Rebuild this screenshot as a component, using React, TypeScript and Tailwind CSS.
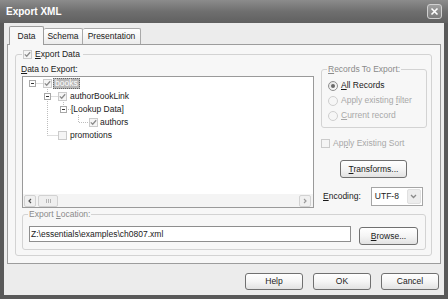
import React from 'react';

const Check = ({ checked = false, disabled = false }: { checked?: boolean; disabled?: boolean }) => (
  <span
    className={`w-[9px] h-[9px] shrink-0 border flex items-center justify-center ${
      disabled ? 'border-[#cbcbcb] bg-[#f5f5f5]' : 'border-[#9a9a9a] bg-gradient-to-br from-[#e2e2e2] to-white'
    }`}
  >
    {checked && (
      <svg width="7" height="7" viewBox="0 0 7 7">
        <path d="M0.8 3.4 L2.7 5.3 L6.2 1.3" fill="none" stroke="#8c8c8c" strokeWidth="1.3" />
      </svg>
    )}
  </span>
);

const Expander = () => (
  <span className="w-[7px] h-[7px] shrink-0 border border-[#a8a8a8] bg-white flex items-center justify-center">
    <span className="w-[3px] h-px bg-[#333]" />
  </span>
);

const Radio = ({ on = false, disabled = false }: { on?: boolean; disabled?: boolean }) => (
  <span
    className={`w-[10px] h-[10px] shrink-0 rounded-full border flex items-center justify-center ${
      disabled ? 'border-[#cfcfcf] bg-[#f6f6f6]' : 'border-[#8f8f8f] bg-gradient-to-br from-[#e0e0e0] to-white'
    }`}
  >
    {on && <span className="w-[4px] h-[4px] rounded-full bg-[#6a6a6a]" />}
  </span>
);

const Button = ({ children, className = '' }: { children: React.ReactNode; className?: string }) => (
  <div
    className={`rounded-[3px] border border-[#707070] bg-gradient-to-b from-white via-[#f5f5f5] to-[#e2e2e2] flex items-center justify-center text-[#1a1a1a] ${className}`}
  >
    {children}
  </div>
);

export default function App() {
  return (
    <div className="w-[448px] h-[299px] bg-[#595959] flex flex-col overflow-hidden font-['Liberation_Sans',Arial,sans-serif] text-[8.5px] leading-[11px] text-[#1a1a1a]">
      {/* title bar */}
      <div className="h-[23px] shrink-0 flex items-center justify-between pl-[6px] pr-[6px] bg-gradient-to-b from-[#8c8c8c] via-[#6f6f6f] to-[#606060]">
        <span className="text-white font-bold text-[10px]">Export XML</span>
        <div className="w-[15px] h-[15px] -mt-px rounded-[3px] border border-[#d0d0d0] bg-gradient-to-b from-[#a0a0a0] to-[#7c7c7c] flex items-center justify-center">
          <svg width="9" height="9" viewBox="0 0 9 9">
            <path d="M1.5 1.5 L7.5 7.5 M7.5 1.5 L1.5 7.5" stroke="white" strokeWidth="1.6" />
          </svg>
        </div>
      </div>

      {/* body */}
      <div className="flex-1 mx-[4px] mb-[4px] bg-[#ececec] flex flex-col">
        {/* tabs */}
        <div className="mt-[3px] h-[18px] pl-[5px] flex items-end">
          <div className="relative z-10 -mb-px w-[35px] h-[19px] border border-b-0 border-[#9c9c9c] rounded-t-[2px] bg-[#f7f7f7] flex items-center justify-center">
            Data
          </div>
          <div className="w-[39px] h-[16px] border border-b-0 border-l-0 border-[#a9a9a9] rounded-t-[2px] bg-gradient-to-b from-white to-[#ececec] flex items-center justify-center">
            Schema
          </div>
          <div className="w-[58px] h-[16px] border border-b-0 border-l-0 border-[#a9a9a9] rounded-t-[2px] bg-gradient-to-b from-white to-[#ececec] flex items-center justify-center">
            Presentation
          </div>
        </div>

        {/* tab panel */}
        <div className="ml-[3px] w-[434px] h-[220px] border border-[#9c9c9c] bg-[#f7f7f7] pt-[9px] pl-[7px]">
          <div className="relative w-[417px] h-[202px] border border-[#d3d3d3] rounded-[3px] pt-[9px] pl-[6px]">
            {/* legend checkbox */}
            <div className="absolute -top-[6px] left-[6px] flex items-center gap-[3px] bg-[#f7f7f7] pl-px pr-[3px]">
              <Check checked disabled />
              <span>
                <u>E</u>xport Data
              </span>
            </div>

            <div className="flex">
              {/* left column */}
              <div className="flex flex-col">
                <span className="-ml-px h-[11px]">
                  <u>D</u>ata to Export:
                </span>
                <div className="mt-px w-[292px] h-[132px] border border-[#9a9a9a] bg-white flex flex-col">
                  <div className="relative flex-1">
                    <svg className="absolute inset-0" width="290" height="116">
                      <g stroke="#bdbdbd" strokeDasharray="1 1" fill="none">
                        <path d="M9.5 6.5 H20" />
                        <path d="M24.5 12 V58.5 M24.5 19.5 H35 M24.5 58.5 H35" />
                        <path d="M40.5 25 V32.5 H48" />
                        <path d="M55.5 38 V45.5 H66" />
                      </g>
                    </svg>
                    <div className="relative flex flex-col">
                      <div className="h-[13px] flex items-center">
                        <span className="ml-[6px]"><Expander /></span>
                        <span className="ml-[7px]"><Check checked disabled /></span>
                        <span className="ml-px h-[11px] px-px bg-[#b8b8b8] text-white border border-dotted border-[#666] flex items-center">books</span>
                      </div>
                      <div className="h-[13px] flex items-center">
                        <span className="ml-[21px]"><Expander /></span>
                        <span className="ml-[7px]"><Check checked disabled /></span>
                        <span className="ml-[3px]">authorBookLink</span>
                      </div>
                      <div className="h-[13px] flex items-center">
                        <span className="ml-[37px]"><Expander /></span>
                        <span className="ml-[4px]">[Lookup Data]</span>
                      </div>
                      <div className="h-[13px] flex items-center">
                        <span className="ml-[66px]"><Check checked disabled /></span>
                        <span className="ml-[2px]">authors</span>
                      </div>
                      <div className="h-[13px] flex items-center">
                        <span className="ml-[35px]"><Check disabled /></span>
                        <span className="ml-[3px]">promotions</span>
                      </div>
                    </div>
                  </div>
                  {/* horizontal scrollbar */}
                  <div className="h-[13px] shrink-0 bg-[#f4f4f4] flex items-center px-px">
                    <div className="w-[12px] h-[12px] rounded-[2px] border border-[#d2d2d2] bg-[#f0f0f0] flex items-center justify-center">
                      <svg width="6" height="6" viewBox="0 0 6 6"><path d="M4 1 L2 3 L4 5" fill="none" stroke="#555" strokeWidth="1.2" /></svg>
                    </div>
                    <div className="ml-[2px] w-[20px] h-[12px] rounded-[2px] border border-[#d2d2d2] bg-[#efefef] flex items-center justify-center gap-px">
                      <span className="w-px h-[4px] bg-[#b5b5b5]" />
                      <span className="w-px h-[4px] bg-[#b5b5b5]" />
                      <span className="w-px h-[4px] bg-[#b5b5b5]" />
                    </div>
                    <div className="ml-auto mr-px w-[12px] h-[12px] rounded-[2px] border border-[#d2d2d2] bg-[#f0f0f0] flex items-center justify-center">
                      <svg width="6" height="6" viewBox="0 0 6 6"><path d="M2 1 L4 3 L2 5" fill="none" stroke="#9a9a9a" strokeWidth="1.2" /></svg>
                    </div>
                  </div>
                </div>
              </div>

              {/* right column */}
              <div className="ml-[7px] pt-[5px] flex flex-col">
                <div className="relative w-[106px] h-[59px] border border-[#d3d3d3] rounded-[3px] pt-[8px] pl-[6px]">
                  <span className="absolute -top-[6px] left-[5px] px-px bg-[#f7f7f7] text-[#8a8a8a]">
                    <u>R</u>ecords To Export:
                  </span>
                  <div className="h-[15px] flex items-center gap-[3px]">
                    <Radio on />
                    <span><u>A</u>ll Records</span>
                  </div>
                  <div className="h-[15px] flex items-center gap-[3px] text-[#a8a8a8]">
                    <Radio disabled />
                    <span>Apply existing <u>f</u>ilter</span>
                  </div>
                  <div className="h-[15px] flex items-center gap-[3px] text-[#a8a8a8]">
                    <Radio disabled />
                    <span><u>C</u>urrent record</span>
                  </div>
                </div>

                <div className="mt-[9px] h-[13px] flex items-center gap-[3px] text-[#a8a8a8]">
                  <Check disabled />
                  <span>Ap<u>p</u>ly Existing Sort</span>
                </div>

                <Button className="mt-[10px] ml-[19px] w-[67px] h-[18px]">
                  <span><u>T</u>ransforms...</span>
                </Button>

                <div className="mt-[9px] h-[19px] flex items-center">
                  <span className="ml-[2px]"><u>E</u>ncoding:</span>
                  <div className="ml-[10px] w-[52px] h-[19px] border border-[#a5a5a5] bg-white flex items-center">
                    <span className="flex-1 pl-[3px]">UTF-8</span>
                    <div className="w-[14px] h-[15px] mr-px rounded-[2px] bg-[#ededed] border border-[#e0e0e0] flex items-center justify-center">
                      <svg width="7" height="5" viewBox="0 0 7 5"><path d="M1 1 L3.5 3.5 L6 1" fill="none" stroke="#8a8a8a" strokeWidth="1.3" /></svg>
                    </div>
                  </div>
                </div>
              </div>
            </div>

            {/* export location */}
            <div className="relative mt-[6px] w-[404px] h-[36px] border border-[#d3d3d3] rounded-[3px] pt-[11px] pl-[6px] flex items-start">
              <span className="absolute -top-[6px] left-[5px] px-px bg-[#f7f7f7] text-[#8a8a8a]">
                Export <u>L</u>ocation:
              </span>
              <div className="w-[322px] h-[16px] border border-[#8e8e8e] bg-white flex items-center pl-px">
                Z:\essentials\examples\ch0807.xml
              </div>
              <Button className="ml-[8px] mt-px w-[59px] h-[18px]">
                <span><u>B</u>rowse...</span>
              </Button>
            </div>
          </div>
        </div>

        {/* bottom buttons */}
        <div className="mt-[9px] flex justify-end gap-[10px] pr-[5px]">
          <Button className="w-[58px] h-[17px]">Help</Button>
          <Button className="w-[58px] h-[17px]">OK</Button>
          <Button className="w-[58px] h-[17px]">Cancel</Button>
        </div>
      </div>
    </div>
  );
}
